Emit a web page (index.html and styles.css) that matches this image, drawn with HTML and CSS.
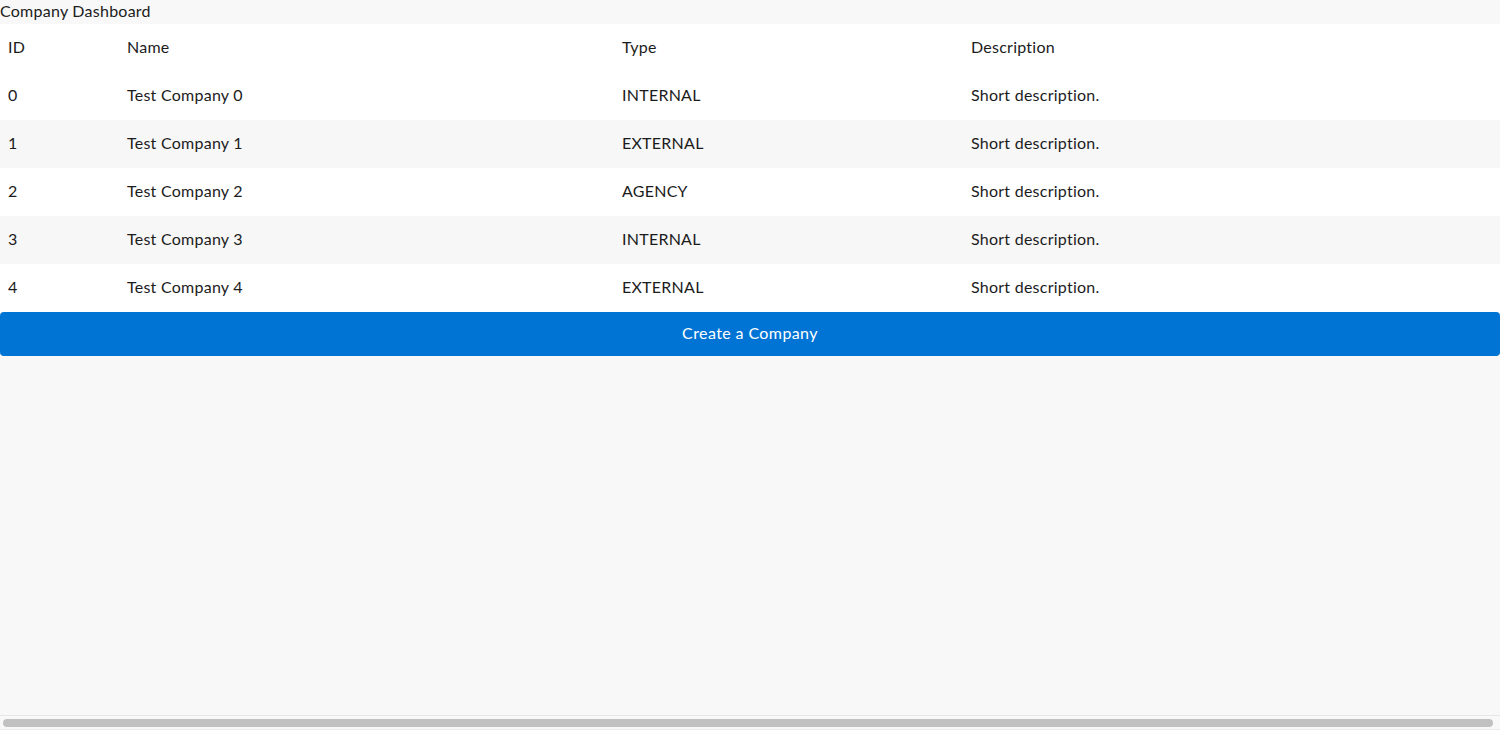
FILE: index.html
```html
<!DOCTYPE html>
<html lang="en">
<head>
<meta charset="utf-8">
<title>Company Dashboard</title>
<link rel="stylesheet" href="styles.css">
</head>
<body>
<div class="page">
  <div class="title">Company Dashboard</div>
  <table class="companies">
    <thead>
      <tr><th class="col-id">ID</th><th class="col-name">Name</th><th class="col-type">Type</th><th class="col-desc">Description</th></tr>
    </thead>
    <tbody>
      <tr><td>0</td><td>Test Company 0</td><td>INTERNAL</td><td>Short description.</td></tr>
      <tr><td>1</td><td>Test Company 1</td><td>EXTERNAL</td><td>Short description.</td></tr>
      <tr><td>2</td><td>Test Company 2</td><td>AGENCY</td><td>Short description.</td></tr>
      <tr><td>3</td><td>Test Company 3</td><td>INTERNAL</td><td>Short description.</td></tr>
      <tr><td>4</td><td>Test Company 4</td><td>EXTERNAL</td><td>Short description.</td></tr>
    </tbody>
  </table>
  <button class="create-btn" type="button">Create a Company</button>
</div>
<div class="hscroll" aria-hidden="true"><div class="hscroll-thumb"></div></div>
</body>
</html>
```

FILE: styles.css
```css
html, body {
  margin: 0;
  padding: 0;
  background: #f8f8f8;
}
body {
  font-family: "Lato", "Open Sans", sans-serif;
  font-size: 16px;
  color: #1c1c1c;
  letter-spacing: 0.25px;
}
.page {
  width: 1500px;
}
.title {
  height: 24px;
  line-height: 22px;
  font-size: 16px;
  box-sizing: border-box;
}
.companies {
  width: 100%;
  border-collapse: collapse;
  background: #ffffff;
}
.companies th,
.companies td {
  height: 48px;
  padding: 0 8px 4px 8px;
  text-align: left;
  font-weight: normal;
  font-size: 16px;
  vertical-align: middle;
  box-sizing: border-box;
}
.col-id { width: 119px; }
.col-name { width: 495px; }
.col-type { width: 349px; }
.companies tbody tr:nth-child(even) {
  background: #f7f7f7;
}
.create-btn {
  display: block;
  width: 100%;
  height: 44px;
  padding: 0 0 4px 0;
  border: none;
  border-radius: 4px;
  background: #0074d4;
  color: #ffffff;
  font-family: inherit;
  font-size: 16px;
  letter-spacing: 0.4px;
  cursor: pointer;
}
.hscroll {
  position: fixed;
  left: 0;
  right: 0;
  bottom: 0;
  height: 15px;
  box-sizing: border-box;
  background: #f8f8f8;
  border-top: 1px solid #e6e6e6;
  border-bottom: 1px solid #ececec;
  padding: 3px 7px 3px 3px;
}
.hscroll-thumb {
  height: 8px;
  border-radius: 4px;
  background: #c1c1c1;
}
```
